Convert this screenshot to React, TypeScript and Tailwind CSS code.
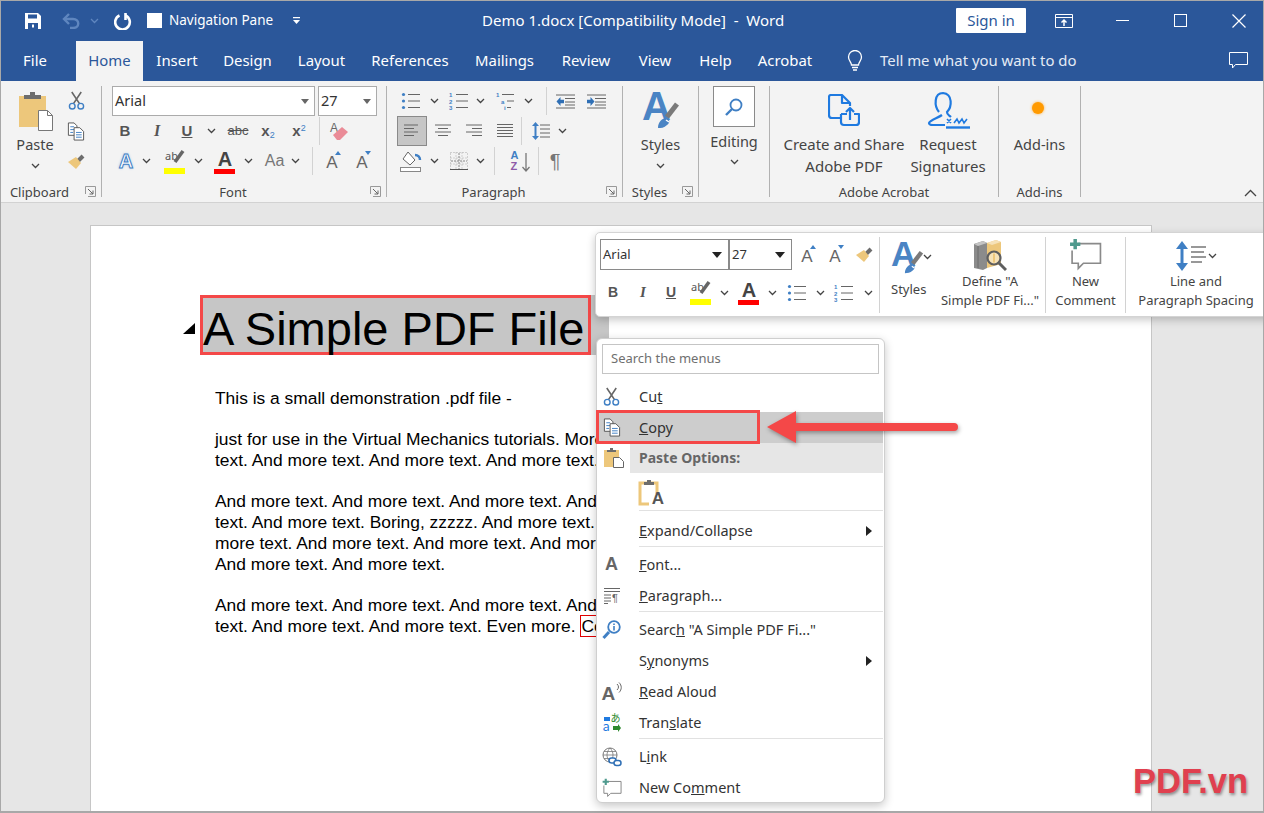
import React from 'react';

const Chev = ({ color = '#444' }: { color?: string }) => (
  <svg width="9" height="6" viewBox="0 0 9 6" fill="none" stroke={color} strokeWidth="1.3"><path d="M1 1l3.5 3.5L8 1" /></svg>
);

const Launcher = () => (
  <svg width="11" height="11" viewBox="0 0 11 11" fill="none" stroke="#666"><path d="M.5 8V.5H10.5V10.5H3" stroke="#999" /><path d="M3 3l5 5M8 4.5V8H4.5" /></svg>
);

const Sep = () => <div className="w-px h-[111px] bg-[#b1b1b1] shrink-0" />;
const VSep = ({ className = 'h-[28px]' }: { className?: string }) => <div className={`w-px bg-[#d2d2d2] shrink-0 ${className}`} />;

const Slot = ({ className, children }: { className: string; children?: React.ReactNode }) => (
  <div className={`flex items-center justify-center shrink-0 ${className}`}>{children}</div>
);

const Cut = ({ w = 17, h = 19 }: { w?: number; h?: number }) => (
  <svg width={w} height={h} viewBox="0 0 18 20" fill="none">
    <path d="M4 1l8 12M14 1L6 13" stroke="#666" strokeWidth="1.7" />
    <circle cx="4.5" cy="16" r="3" stroke="#3f7fc4" strokeWidth="1.5" />
    <circle cx="13.5" cy="16" r="3" stroke="#3f7fc4" strokeWidth="1.5" />
  </svg>
);

const CopyIcon = () => (
  <svg width="18" height="19" viewBox="0 0 18 20" fill="#fff" stroke="#555">
    <path d="M1 1h6l3 3v10H1z" />
    <path d="M3 5h4M3 8h4M3 11h3" stroke="#3f7fc4" />
    <path d="M7 6h6l4 4v9H7z" />
    <path d="M9 11h6M9 13.5h6M9 16h6" stroke="#3f7fc4" />
  </svg>
);

const Painter = () => (
  <svg width="18" height="16" viewBox="0 0 18 16">
    <path d="M11 7l5-5" stroke="#6d6d6d" strokeWidth="4" />
    <path d="M1 8l8-5 5 6-5 6z" fill="#edc77b" />
  </svg>
);

const PasteIcon = () => (
  <svg width="36" height="40" viewBox="0 0 36 40">
    <rect x="2" y="5" width="27" height="31" fill="#edc77b" />
    <path d="M7 8V4h6V1h5v3h6v4z" fill="#6d6d6d" />
    <path d="M21.5 19.5h9l5 5v15h-14z" fill="#fff" stroke="#777" />
    <path d="M30.5 19.5v5h5" fill="none" stroke="#777" />
  </svg>
);

const LinesIcon = ({ d, color = '#666' }: { d: string; color?: string }) => (
  <svg width="18" height="16" viewBox="0 0 18 16" fill="none" stroke={color}><path d={d} /></svg>
);

const Bullets = () => (
  <svg width="20" height="18" viewBox="0 0 20 18" fill="none">
    <path d="M7 2.5h12M7 9h12M7 15.5h12" stroke="#666" />
    <circle cx="2.5" cy="2.5" r="1.6" fill="#3f7fc4" /><circle cx="2.5" cy="9" r="1.6" fill="#3f7fc4" /><circle cx="2.5" cy="15.5" r="1.6" fill="#3f7fc4" />
  </svg>
);

const Numbers = () => (
  <svg className="overflow-visible" width="20" height="18" viewBox="0 0 20 18" fill="none">
    <path d="M7 2.5h12M7 9h12M7 15.5h12" stroke="#666" />
    <text x="0" y="5" fontSize="6" fontWeight="700" fill="#3f7fc4" stroke="none" fontFamily="Liberation Sans">1</text>
    <text x="0" y="11.5" fontSize="6" fontWeight="700" fill="#3f7fc4" stroke="none" fontFamily="Liberation Sans">2</text>
    <text x="0" y="18" fontSize="6" fontWeight="700" fill="#3f7fc4" stroke="none" fontFamily="Liberation Sans">3</text>
  </svg>
);

const Multilevel = () => (
  <svg className="overflow-visible" width="20" height="18" viewBox="0 0 20 18" fill="none">
    <path d="M6 2.5h12M11 9h7M11 15.5h4" stroke="#666" />
    <text x="0" y="5" fontSize="6" fontWeight="700" fill="#3f7fc4" stroke="none" fontFamily="Liberation Sans">1</text>
    <text x="5" y="11.5" fontSize="6" fontWeight="700" fill="#3f7fc4" stroke="none" fontFamily="Liberation Sans">a</text>
    <text x="8" y="17.5" fontSize="6" fontWeight="700" fill="#3f7fc4" stroke="none" fontFamily="Liberation Sans">i</text>
  </svg>
);

const Indent = ({ flip = false }: { flip?: boolean }) => (
  <svg width="19" height="15" viewBox="0 0 19 15" fill="none">
    {flip ? (
      <>
        <path d="M0 1h19M8 4.5h11M8 8h11M8 11h11M0 14h19" stroke="#666" />
        <path d="M0 5.8h3.5V3l4 4.5-4 4.5V9.2H0z" fill="#2f6fb5" />
      </>
    ) : (
      <>
        <path d="M0 1h19M9 4.5h10M9 8h10M9 11h10M0 14h19" stroke="#666" />
        <path d="M8 5.8H4.5V3l-4 4.5 4 4.5V9.2H8z" fill="#2f6fb5" />
      </>
    )}
  </svg>
);

const FontA = ({ className }: { className: string }) => (
  <span className={`font-['Liberation_Sans',sans-serif] font-bold leading-none ${className}`}>A</span>
);

const Highlight = () => (
  <div className="relative w-[22px] h-[25px]">
    <span className="absolute left-px top-0 text-[11px] leading-[13px] text-[#555]">ab</span>
    <svg className="absolute left-[9px] top-0" width="13" height="16" viewBox="0 0 13 16"><path d="M2 13l8-11" stroke="#666" strokeWidth="3.5" /></svg>
    <div className="absolute left-0 bottom-0 w-[21px] h-[6px] bg-[#ffff00]" />
  </div>
);

const FontColor = () => (
  <div className="relative w-[22px] h-[25px] flex justify-center">
    <FontA className="text-[20px] text-[#444]" />
    <div className="absolute left-0 bottom-0 w-[21px] h-[5px] bg-[#ff0000]" />
  </div>
);

const SizeA = ({ up }: { up: boolean }) => (
  <div className="relative w-[20px] h-[20px] flex items-end justify-center">
    <span className="font-['Liberation_Sans',sans-serif] text-[#666] leading-none text-[17px]">A</span>
    <svg className="absolute right-0 top-0" width="7" height="5" viewBox="0 0 7 5" fill="#3f7fc4"><path d={up ? 'M0 4h6L3 0z' : 'M0 0h6L3 4z'} /></svg>
  </div>
);

const StylesIcon = ({ w = 38, h = 38 }: { w?: number; h?: number }) => (
  <svg className="overflow-visible" width={w} height={h} viewBox="0 0 38 38">
    <text x="0" y="29" fontSize="40" fontWeight="700" fill="#4a84c4" fontFamily="Liberation Sans">A</text>
    <path d="M25 26l10-13" stroke="#7a7a7a" strokeWidth="5" />
    <path d="M16 37c0-6 4-10 9-10 3 1 3 5 0 7-3 3-6 3-9 3z" fill="#4a84c4" />
    <path d="M24 29l3 2" stroke="#fff" strokeWidth="1.5" />
  </svg>
);

const CommentPlus = ({ w = 22, h = 20 }: { w?: number; h?: number }) => (
  <svg width={w} height={h} viewBox="0 0 32 32" fill="none">
    <path d="M9 5.5h21.5v19H14l-5 5v-5H3V12" stroke="#8a8a8a" strokeWidth="1.6" fill="#fff" />
    <path d="M6 1v10M1 6h10" stroke="#4f9a8e" strokeWidth="3.4" />
  </svg>
);

const Group = ({ className, label, launcher, children }: { className: string; label: string; launcher?: boolean; children: React.ReactNode }) => (
  <div className={`relative flex flex-col h-[117px] shrink-0 ${className}`}>
    <div className="h-[96px]">{children}</div>
    <div className={`h-[21px] leading-[21px] text-center text-[13px] text-[#444] ${launcher ? 'pr-[22px]' : ''}`}>{label}</div>
    {launcher && <div className="absolute right-[5px] bottom-[6px]"><Launcher /></div>}
  </div>
);

const tabs = [
  { label: 'File', cls: 'w-[70px] mr-[6px] text-white' },
  { label: 'Home', cls: 'w-[67px] bg-[#f3f3f3] text-[#2b579a]' },
  { label: 'Insert', cls: 'w-[68px] text-white' },
  { label: 'Design', cls: 'w-[73px] text-white' },
  { label: 'Layout', cls: 'w-[75px] text-white' },
  { label: 'References', cls: 'w-[102px] text-white' },
  { label: 'Mailings', cls: 'w-[87px] text-white' },
  { label: 'Review', cls: 'w-[76px] text-white' },
  { label: 'View', cls: 'w-[62px] text-white' },
  { label: 'Help', cls: 'w-[59px] text-white' },
  { label: 'Acrobat', cls: 'w-[80px] text-white' },
];

function TitleBar() {
  return (
    <div className="h-[40px] pb-[1px] bg-[#2b579a] flex items-center text-white shrink-0">
      <div className="w-[482px] flex items-center shrink-0">
        <svg className="ml-[24px]" width="18" height="18" viewBox="0 0 18 18">
          <path d="M1 1h13l3 3v13H1z" fill="#fff" />
          <rect x="4" y="2.5" width="9" height="4" fill="#2b579a" />
          <rect x="4" y="11" width="10" height="6" fill="#2b579a" />
          <rect x="8" y="12.5" width="2" height="3" fill="#fff" />
        </svg>
        <svg className="ml-[20px]" width="18" height="16" viewBox="0 0 18 16" fill="none" stroke="#5f86bf" strokeWidth="2.4">
          <path d="M2 6h9c7 0 7 9 0 9H8" /><path d="M7 1L2 6l5 5" />
        </svg>
        <div className="ml-[10px]"><Chev color="#5f86bf" /></div>
        <svg className="ml-[15px]" width="18" height="18" viewBox="0 0 18 18" fill="none" stroke="#fff" strokeWidth="2.6">
          <path d="M5.5 3.5a7.3 7.3 0 1 0 6 0" /><path d="M11.5 1v7" />
        </svg>
        <div className="ml-[15px] w-[15px] h-[15px] bg-white" />
        <div className="ml-[7px] w-[100px] text-[13.5px] whitespace-nowrap">Navigation Pane</div>
        <svg className="ml-[24px]" width="7" height="8" viewBox="0 0 7 8" fill="#fff"><path d="M0 0h7v1.3H0zM0 3h7L3.5 7z" /></svg>
      </div>
      <div className="text-[15px] whitespace-pre">Demo 1.docx [Compatibility Mode]  -  Word</div>
      <div className="ml-auto flex items-center">
        <div className="w-[70px] h-[25px] bg-white text-[#2b579a] text-[15px] leading-[25px] text-center rounded-[1px]">Sign in</div>
        <svg className="ml-[29px]" width="18" height="14" viewBox="0 0 18 14" fill="none" stroke="#fff"><path d="M.5 3.5h17M.5.5h17v13H.5z" /><path d="M9 12V6M6.5 8.5L9 6l2.5 2.5" strokeWidth="1.5" /></svg>
        <div className="ml-[43px] w-[13px] h-px bg-white" />
        <div className="ml-[45px] w-[13px] h-[13px] border border-white" />
        <svg className="ml-[45px] mr-[18px]" width="14" height="14" viewBox="0 0 14 14" stroke="#fff" strokeWidth="1.2"><path d="M.5.5l13 13M13.5.5l-13 13" /></svg>
      </div>
    </div>
  );
}

function TabRow() {
  return (
    <div className="h-[40px] bg-[#2b579a] flex items-stretch text-[14.9px] shrink-0">
      {tabs.map((t) => (
        <div key={t.label} className={`leading-[38px] text-center whitespace-nowrap shrink-0 ${t.cls}`}>{t.label}</div>
      ))}
      <div className="ml-[21px] flex items-center text-[#e4ebf5]">
        <svg width="18" height="22" viewBox="0 0 18 22" fill="none" stroke="#fff" strokeWidth="1.3">
          <path d="M5.5 15c0-3-3-4-3-8a6.5 6.5 0 0 1 13 0c0 4-3 5-3 8z" /><path d="M6 17.5h6M7 20h4" />
        </svg>
        <span className="ml-[16px] -mt-[2px] whitespace-nowrap">Tell me what you want to do</span>
      </div>
      <div className="ml-auto mr-[16px] flex items-center">
        <svg width="19" height="18" viewBox="0 0 19 18" fill="none" stroke="#fff"><path d="M.5.5h18v12H6.5l-3 3.5v-3.5h-3z" /></svg>
      </div>
    </div>
  );
}

function Ribbon() {
  return (
    <div className="relative h-[122px] bg-[#f3f3f3] border-b border-[#d2d2d2] flex items-start pt-[5px] text-[#444] shrink-0">
      <Group className="w-[101px]" label="Clipboard" launcher>
        <div className="flex">
          <div className="w-[70px] flex flex-col items-center">
            <div className="mt-[5px] h-[40px]"><PasteIcon /></div>
            <div className="mt-[2px] text-[14.5px] leading-[22px]">Paste</div>
            <div className="mt-[8px] flex"><Chev /></div>
          </div>
          <div className="-ml-[3px] w-[18px] flex flex-col items-center">
            <div className="mt-[5px]"><Cut /></div>
            <div className="mt-[12px]"><CopyIcon /></div>
            <div className="mt-[13px]"><Painter /></div>
          </div>
        </div>
      </Group>
      <Sep />
      <Group className="w-[284px]" label="Font" launcher>
        <div className="pl-[10px]">
          <div className="flex h-[30px]">
            <div className="w-[203px] border border-[#ababab] bg-white flex items-center pl-[2px] text-[14.5px] text-[#333]">
              Arial
              <svg className="ml-auto mr-[5px]" width="8" height="5" fill="#666"><path d="M0 0h8L4 5z" /></svg>
            </div>
            <div className="ml-[3px] w-[59px] border border-[#ababab] bg-white flex items-center pl-[2px] text-[14.5px] text-[#333]">
              27
              <svg className="ml-auto mr-[5px]" width="8" height="5" fill="#666"><path d="M0 0h8L4 5z" /></svg>
            </div>
          </div>
          <div className="flex h-[30px] items-center">
            <Slot className="w-[26px]"><span className="font-['Liberation_Sans',sans-serif] font-bold text-[15px] text-[#555]">B</span></Slot>
            <Slot className="w-[38px]"><span className="font-['Liberation_Serif',serif] italic font-bold text-[16px] text-[#555]">I</span></Slot>
            <Slot className="w-[22px]"><span className="font-['Liberation_Sans',sans-serif] font-bold text-[15px] text-[#555] underline">U</span></Slot>
            <Slot className="w-[26px]"><Chev /></Slot>
            <Slot className="w-[28px]"><span className="font-['Liberation_Sans',sans-serif] text-[13px] text-[#555] line-through">abc</span></Slot>
            <Slot className="w-[32px]"><span className="font-['Liberation_Sans',sans-serif] font-bold text-[15px] text-[#555]">x<sub className="text-[#3f7fc4] text-[9px] font-normal">2</sub></span></Slot>
            <Slot className="w-[30px]"><span className="font-['Liberation_Sans',sans-serif] font-bold text-[15px] text-[#555]">x<sup className="text-[#3f7fc4] text-[9px] font-normal">2</sup></span></Slot>
            <Slot className="w-[10px]"><VSep /></Slot>
            <Slot className="w-[30px]">
              <div className="relative w-[20px] h-[20px]">
                <span className="absolute left-[1px] -top-[2px] font-['Liberation_Sans',sans-serif] text-[12px] text-[#666]">A</span>
                <svg className="absolute left-[3px] top-[5px]" width="17" height="15" viewBox="0 0 17 15"><path d="M1 9l9-8 6 5-8 8H5z" fill="#ea8b97" /></svg>
              </div>
            </Slot>
          </div>
          <div className="flex h-[30px] items-center">
            <Slot className="w-[28px]"><span className="font-['Liberation_Sans',sans-serif] font-bold text-[20px] text-white [-webkit-text-stroke:1px_#3f7fc4] [text-shadow:0_0_3px_#8ab6e6]">A</span></Slot>
            <Slot className="w-[12px]"><Chev /></Slot>
            <Slot className="ml-[8px] w-[30px]"><Highlight /></Slot>
            <Slot className="ml-[2px] w-[12px]"><Chev /></Slot>
            <Slot className="ml-[6px] w-[30px]"><FontColor /></Slot>
            <Slot className="ml-[2px] w-[12px]"><Chev /></Slot>
            <Slot className="ml-[6px] w-[29px]"><span className="font-['Liberation_Sans',sans-serif] text-[16px] text-[#777]">Aa</span></Slot>
            <Slot className="w-[12px]"><Chev /></Slot>
            <div className="ml-[11px]"><VSep /></div>
            <Slot className="ml-[4px] w-[30px]"><SizeA up /></Slot>
            <Slot className="w-[30px]"><SizeA up={false} /></Slot>
          </div>
        </div>
      </Group>
      <Sep />
      <Group className="w-[235px]" label="Paragraph" launcher>
        <div className="pl-[10px]">
          <div className="flex h-[30px] items-center">
            <Slot className="w-[28px]"><Bullets /></Slot>
            <Slot className="ml-[3px] w-[12px]"><Chev /></Slot>
            <Slot className="ml-[6px] w-[26px]"><Numbers /></Slot>
            <Slot className="ml-[2px] w-[12px]"><Chev /></Slot>
            <Slot className="ml-[7px] w-[26px]"><Multilevel /></Slot>
            <Slot className="ml-[4px] w-[10px]"><Chev /></Slot>
            <div className="ml-[13px]"><VSep /></div>
            <Slot className="ml-[3px] w-[30px]"><Indent /></Slot>
            <Slot className="ml-[1px] w-[30px]"><Indent flip /></Slot>
          </div>
          <div className="flex h-[30px] items-center">
            <Slot className="w-[30px] h-[30px] bg-[#c6c6c6] border border-[#8a8a8a]"><LinesIcon d="M1 2h14M1 5.5h10M1 9h14M1 12.5h10" /></Slot>
            <Slot className="w-[31px]"><LinesIcon d="M1 2h16M4 5.5h10M1 9h16M4 12.5h10" /></Slot>
            <Slot className="w-[31px]"><LinesIcon d="M1 2h16M7 5.5h10M1 9h16M7 12.5h10" /></Slot>
            <Slot className="w-[31px]"><LinesIcon d="M1 1.5h16M1 4.5h16M1 7.5h16M1 10.5h16M1 13.5h16" /></Slot>
            <div className="ml-[1px]"><VSep /></div>
            <Slot className="ml-[7px] w-[24px]">
              <svg width="18" height="20" viewBox="0 0 18 20" fill="none">
                <path d="M8 4h10M8 8h10M8 12h10M8 16h10" stroke="#666" />
                <path d="M3.5 3v14" stroke="#3f7fc4" strokeWidth="2" /><path d="M0 5l3.5-4L7 5zM0 15l3.5 4L7 15z" fill="#3f7fc4" />
              </svg>
            </Slot>
            <Slot className="ml-[3px] w-[12px]"><Chev /></Slot>
          </div>
          <div className="flex h-[30px] items-center">
            <Slot className="w-[28px]">
              <svg width="22" height="21" viewBox="0 0 22 21" fill="none">
                <path d="M8 1l7 8-5 5-7-6z" stroke="#666" fill="#fff" /><path d="M15 4c3 0 5 2 5 5" stroke="#3f7fc4" strokeWidth="2.5" />
                <rect x=".5" y="16.5" width="20" height="4" stroke="#888" fill="#fff" />
              </svg>
            </Slot>
            <Slot className="ml-[3px] w-[12px]"><Chev /></Slot>
            <Slot className="ml-[6px] w-[26px]">
              <svg width="18" height="18" viewBox="0 0 18 18" fill="none">
                <path d="M.5.5h17v17H.5zM6 .5v17M12 .5v17M.5 6h17M.5 12h17" stroke="#aaa" strokeDasharray="1 2" />
                <path d="M9 1v16M1 9h16" stroke="#888" strokeDasharray="2 1" />
                <path d="M0 17.5h18" stroke="#555" />
              </svg>
            </Slot>
            <Slot className="ml-[2px] w-[12px]"><Chev /></Slot>
            <div className="ml-[8px]"><VSep /></div>
            <Slot className="ml-[13px] w-[24px]">
              <div className="relative w-[19px] h-[22px] font-['Liberation_Sans',sans-serif] font-bold text-[11px] leading-[11px]">
                <div className="text-[#3f7fc4]">A</div>
                <div className="text-[#8e5aa8]">Z</div>
                <svg className="absolute right-0 top-[3px]" width="8" height="19" viewBox="0 0 8 19" fill="none" stroke="#777" strokeWidth="1.3"><path d="M4 0v18M.5 14L4 18l3.5-4" /></svg>
              </div>
            </Slot>
            <div className="ml-[6px]"><VSep /></div>
            <Slot className="ml-[5px] w-[22px]"><span className="text-[20px] text-[#777] font-['Liberation_Sans',sans-serif]">¶</span></Slot>
          </div>
        </div>
      </Group>
      <Sep />
      <Group className="w-[75px]" label="Styles" launcher>
        <div className="flex flex-col items-center">
          <div className="mt-[5px] h-[40px]"><StylesIcon /></div>
          <div className="mt-[2px] text-[14.5px] leading-[22px]">Styles</div>
          <div className="mt-[8px] flex"><Chev /></div>
        </div>
      </Group>
      <Sep />
      <Group className="w-[70px]" label="">
        <div className="flex flex-col items-center">
          <Slot className="w-[42px] h-[41px] bg-white border border-[#8a8a8a]">
            <svg width="18" height="18" viewBox="0 0 18 18" fill="none" stroke="#3f7fc4" strokeWidth="1.8"><circle cx="11" cy="7" r="5.5" /><path d="M7 11l-6 6" strokeWidth="2.4" /></svg>
          </Slot>
          <div className="mt-[3px] text-[14.5px] leading-[22px]">Editing</div>
          <div className="mt-[7px] flex"><Chev /></div>
        </div>
      </Group>
      <Sep />
      <Group className="w-[228px]" label="Adobe Acrobat">
        <div className="flex pl-[9px]">
          <div className="w-[130px] flex flex-col items-center text-[15px] leading-[22px] text-center">
            <div className="mt-[8px] h-[37px]">
              <svg width="32" height="33" viewBox="0 0 32 33" fill="none" stroke="#1f7ae0" strokeWidth="2.2" strokeLinejoin="round">
                <path d="M13 24H4c-2 0-3-1-3-3V3c0-1 1-2 2-2h11l8 8v3" /><path d="M14 1v8h8" />
                <path d="M13 20v8c0 2 1 3 3 3h12c2 0 3-1 3-3v-8h-5M19 20h-6" /><path d="M22 26V14M18 18l4-4 4 4" />
              </svg>
            </div>
            <div className="mt-[2px] whitespace-nowrap">Create and Share</div>
            <div className="whitespace-nowrap">Adobe PDF</div>
          </div>
          <div className="w-[78px] flex flex-col items-center text-[15px] leading-[22px] text-center">
            <div className="mt-[5px] h-[40px]">
              <svg width="43" height="38" viewBox="0 0 43 38" fill="none" stroke="#1f7ae0" strokeWidth="2.2">
                <path d="M15 24c-4 3-12 5-13 8 0 2 2 2 4 2h12M24 26c-2-2-4-2-4-5 5-5 6-18-4-19-9 0-9 13-4 19" />
                <path d="M19 36.500h24" strokeWidth="2.4" />
                <path d="M20 28l4 4M24 28l-4 4M27 32l3-4 2 4 3-4 2 4 3-4" strokeWidth="1.6" />
              </svg>
            </div>
            <div className="mt-[2px]">Request</div>
            <div>Signatures</div>
          </div>
        </div>
      </Group>
      <Sep />
      <Group className="w-[81px]" label="Add-ins">
        <div className="flex flex-col items-center">
          <div className="mt-[16px] mb-[15px] -ml-[3px] w-[12px] h-[12px] rounded-full bg-[#ff9a00] shadow-[0_0_3px_#ffb040]" />
          <div className="mt-[4px] text-[14.5px] leading-[22px]">Add-ins</div>
        </div>
      </Group>
      <Sep />
      <div className="ml-auto mr-[7px] mt-[103px]">
        <svg width="13" height="8" viewBox="0 0 13 8" fill="none" stroke="#444" strokeWidth="1.3"><path d="M1 7l5.500-5.500L12 7" /></svg>
      </div>
    </div>
  );
}

function Page() {
  return (
    <div className="flex-1 bg-[#e6e6e6] pt-[22px] pl-[89px] overflow-hidden">
      <div className="w-[1062px] h-[600px] bg-white border border-[#c6c6c6] pt-[69px] font-['Liberation_Sans',sans-serif] text-black overflow-hidden">
        <div className="relative ml-[109px] w-[409px] h-[60px] bg-[#c6c6c6]">
          <div className="absolute -left-[17px] top-[28px] w-0 h-0 border-l-[12px] border-l-transparent border-b-[11px] border-b-black" />
          <div className="w-[391px] h-[60px] border-[3px] border-[#f44848] text-[47px] leading-[62px] whitespace-nowrap">A Simple PDF File</div>
        </div>
        <div className="ml-[124px] mt-[33px] text-[17.4px] leading-[20.7px] whitespace-nowrap">
          <p className="mb-[20.7px]">This is a small demonstration .pdf file -</p>
          <p className="mb-[20.7px]">just for use in the Virtual Mechanics tutorials. More text. And more<br />text. And more text. And more text. And more text. And more text.</p>
          <p className="mb-[20.7px]">And more text. And more text. And more text. And more text. And more<br />text. And more text. Boring, zzzzz. And more text. And more text. And<br />more text. And more text. And more text. And more text. And more text.<br />And more text. And more text.</p>
          <p>And more text. And more text. And more text. And more text. And more<br />text. And more text. And more text. Even more. <span className="border border-[#e00000] py-[0px]">Continued on page 2 ...</span></p>
        </div>
      </div>
    </div>
  );
}

function MiniToolbar() {
  return (
    <div className="absolute left-[594px] top-[231px] w-[680px] h-[85px] bg-white border border-[#d4d4d4] rounded-[5px] shadow-[0_3px_8px_rgba(0,0,0,0.22)] flex text-[13px] text-[#444]">
      <div className="w-[283px] pl-[4px] pt-[6px]">
        <div className="flex h-[31px]">
          <div className="w-[129px] border border-[#8a8a8a] flex items-center pl-[2px] text-[13px] text-[#333]">
            Arial<svg className="ml-auto mr-[6px]" width="10" height="6" fill="#222"><path d="M0 0h10L5 6z" /></svg>
          </div>
          <div className="w-[63px] border border-[#8a8a8a] flex items-center pl-[2px] text-[13px] text-[#333]">
            27<svg className="ml-auto mr-[6px]" width="10" height="6" fill="#222"><path d="M0 0h10L5 6z" /></svg>
          </div>
          <Slot className="ml-px w-[28px]"><SizeA up /></Slot>
          <Slot className="w-[28px]"><SizeA up={false} /></Slot>
          <Slot className="w-[30px]"><Painter /></Slot>
        </div>
        <div className="flex h-[31px] mt-[7px] items-center">
          <Slot className="w-[26px]"><span className="font-['Liberation_Sans',sans-serif] font-bold text-[14px] text-[#555]">B</span></Slot>
          <Slot className="w-[34px]"><span className="font-['Liberation_Serif',serif] italic font-bold text-[15px] text-[#555]">I</span></Slot>
          <Slot className="w-[22px]"><span className="font-['Liberation_Sans',sans-serif] font-bold text-[14px] text-[#555] underline">U</span></Slot>
          <Slot className="ml-[2px] w-[34px]"><Highlight /></Slot>
          <Slot className="w-[12px]"><Chev /></Slot>
          <Slot className="ml-[4px] w-[30px]"><FontColor /></Slot>
          <Slot className="ml-[2px] w-[12px]"><Chev /></Slot>
          <Slot className="ml-[4px] w-[30px]"><Bullets /></Slot>
          <Slot className="ml-[2px] w-[12px]"><Chev /></Slot>
          <Slot className="ml-[3px] w-[30px]"><Numbers /></Slot>
          <Slot className="ml-[3px] w-[12px]"><Chev /></Slot>
        </div>
      </div>
      <VSep className="mt-[4px] h-[76px]" />
      <div className="w-[55px] pl-[11px] pt-[7px]">
        <div className="flex items-center h-[34px]"><StylesIcon w={33} h={33} /><div className="-ml-px"><Chev /></div></div>
        <div className="mt-[6px] w-[32px] text-center leading-[19px]">Styles</div>
      </div>
      <div className="w-[110px] flex flex-col items-center pt-[6px]">
        <svg width="34" height="33" viewBox="0 0 34 33">
          <path d="M1 5l9-3 4 2v25l-4 2-9-2z" fill="#8b8b8b" />
          <path d="M1 5l9-3 4 2-9 3z" fill="#c4c4c4" />
          <path d="M5 7v22" stroke="#6a6a6a" strokeWidth="1" />
          <path d="M14 4l9-3 5 2v22l-14 4z" fill="#edc77b" />
          <path d="M14 4l9-3 5 2-9 3z" fill="#f6e2b8" />
          <circle cx="21" cy="19" r="6.500" fill="#f6e2b8" stroke="#5e5e5e" strokeWidth="2.200" />
          <path d="M21 14.500v9" stroke="#edc77b" strokeWidth="2" />
          <path d="M26 24l7 7" stroke="#5e5e5e" strokeWidth="3" />
        </svg>
        <div className="mt-[0px] leading-[19px] text-center whitespace-nowrap">Define "A<br />Simple PDF Fi..."</div>
      </div>
      <VSep className="mt-[4px] h-[76px]" />
      <div className="w-[79px] flex flex-col items-center pt-[5px]">
        <div className="h-[34px]"><CommentPlus w={33} h={33} /></div>
        <div className="leading-[19px] text-center">New<br />Comment</div>
      </div>
      <VSep className="mt-[4px] h-[76px]" />
      <div className="w-[139px] pl-[1px] flex flex-col items-center pt-[6px]">
        <div className="h-[33px] flex items-center">
          <svg width="32" height="32" viewBox="0 0 32 32" fill="none">
            <path d="M6 6v20" stroke="#3f7fc4" strokeWidth="3" /><path d="M0 9l6-8 6 8zM0 23l6 8 6-8z" fill="#3f7fc4" />
            <path d="M15 7h15M15 12h13M15 17h15M15 22h11" stroke="#777" strokeWidth="1.3" />
          </svg>
          <Chev />
        </div>
        <div className="leading-[19px] text-center whitespace-nowrap">Line and<br />Paragraph Spacing</div>
      </div>
    </div>
  );
}

const MenuRow = ({ icon, arrow, children }: { icon?: React.ReactNode; arrow?: boolean; children: React.ReactNode }) => (
  <div className="flex items-center h-[31px]">
    <Slot className="w-[29px]">{icon}</Slot>
    <div className="ml-[13px] whitespace-nowrap">{children}</div>
    {arrow && <svg className="ml-auto mr-[12px]" width="6" height="10" fill="#222"><path d="M0 0l6 5-6 5z" /></svg>}
  </div>
);

const MenuSep = () => <div className="ml-[42px] mr-px h-px bg-[#e1e1e1]" />;

function ContextMenu() {
  return (
    <div className="absolute left-[595px] top-[337px] w-[289px] h-[465px] bg-white border border-[#cfcfcf] rounded-[6px] shadow-[0_3px_10px_rgba(0,0,0,0.22)] text-[14.5px] text-[#333]">
      <div className="mx-[5px] mt-[5px] h-[30px] border border-[#c5c5c5] pl-[8px] text-[13px] leading-[27px] text-[#6f6f6f]">Search the menus</div>
      <div className="h-[7px]" />
      <MenuRow icon={<Cut />}>Cu<u>t</u></MenuRow>
      <div className="bg-[#cdcdcd] mr-px"><MenuRow icon={<CopyIcon />}><u>C</u>opy</MenuRow></div>
      <div className="flex h-[30px]">
        <Slot className="w-[32px] pl-[2px]">
          <svg width="20" height="20" viewBox="0 0 20 20">
            <rect x="0" y="2" width="15" height="17" fill="#edc77b" /><path d="M3 4V2h3V0h3v2h3v2z" fill="#6d6d6d" />
            <path d="M9.500 9.500h6l4 4v6h-10z" fill="#fff" stroke="#666" />
          </svg>
        </Slot>
        <div className="flex-1 ml-px mr-px bg-[#e6e6e6] pl-[9px] font-bold text-[14px] text-[#666] leading-[30px]">Paste Options:</div>
      </div>
      <div className="h-[37px] pl-[41px] pt-[6px]">
        <div className="relative w-[26px] h-[28px]">
          <svg width="26" height="28" viewBox="0 0 26 28" fill="none">
            <path d="M11 25H2V4h17v11" stroke="#edc77b" strokeWidth="3" /><path d="M6 6V3h3V1h4v2h3v3z" fill="#6d6d6d" />
          </svg>
          <span className="absolute right-0 bottom-0 font-['Liberation_Sans',sans-serif] font-bold text-[17px] leading-[17px] text-[#555]">A</span>
        </div>
      </div>
      <MenuSep />
      <div className="h-[4px]" />
      <MenuRow arrow><u>E</u>xpand/Collapse</MenuRow>
      <MenuSep />
      <div className="h-[2px]" />
      <MenuRow icon={<span className="font-['Liberation_Sans',sans-serif] font-bold text-[18px] text-[#666]">A</span>}><u>F</u>ont...</MenuRow>
      <MenuRow icon={
        <svg width="18" height="16" viewBox="0 0 18 16" fill="none" stroke="#666"><path d="M1 .5h16M1 3.500h16M1 7h7M1 10h7M1 13h7M1 15.500h4" /><text x="9" y="14" fontSize="11" fill="#666" stroke="none" fontFamily="Liberation Sans">¶</text></svg>
      }><u>P</u>aragraph...</MenuRow>
      <MenuSep />
      <div className="h-[2px]" />
      <MenuRow icon={
        <svg width="19" height="20" viewBox="0 0 19 20" fill="none"><circle cx="12" cy="7" r="5.800" stroke="#3f7fc4" strokeWidth="1.8" /><path d="M7 12l-5.500 6" stroke="#3f7fc4" strokeWidth="3" /><path d="M12 3.500v1.500M12 6v4.500" stroke="#3f7fc4" strokeWidth="1.6" /></svg>
      }>Searc<u>h</u> "A Simple PDF Fi..."</MenuRow>
      <MenuRow arrow>S<u>y</u>nonyms</MenuRow>
      <MenuRow icon={
        <div className="relative w-[20px] h-[20px]"><span className="absolute left-0 bottom-0 font-['Liberation_Sans',sans-serif] font-bold text-[19px] leading-[17px] text-[#666]">A</span>
          <svg className="absolute right-0 top-0" width="6" height="11" viewBox="0 0 6 11" fill="none" stroke="#666"><path d="M1 2c2 2 2 4 0 6M3 .5c3 3 3 7 0 10" /></svg></div>
      }><u>R</u>ead Aloud</MenuRow>
      <MenuRow icon={
        <div className="relative w-[18px] h-[19px] leading-none font-['Noto_Sans_CJK_JP',sans-serif]">
          <span className="absolute right-0 top-0 text-[10px] text-[#2d8a2d]">あ</span>
          <span className="absolute left-0 bottom-0 text-[13px] text-[#1f7ae0]">a</span>
          <svg className="absolute left-0 top-px" width="8" height="8" fill="#1f7ae0"><path d="M1 3h6v4H1z" /></svg>
          <svg className="absolute right-0 bottom-0" width="9" height="8" fill="#2d8a2d"><path d="M1 2h5V0l3 4-3 4V6H1z" /></svg>
        </div>
      }>Tran<u>s</u>late</MenuRow>
      <MenuSep />
      <div className="h-[2px]" />
      <MenuRow icon={
        <svg width="20" height="20" viewBox="0 0 20 20" fill="none"><circle cx="8" cy="8" r="7" stroke="#777" /><path d="M1 8h14M8 1c-4 4-4 10 0 14M8 1c4 4 4 10 0 14M2 4.500h12M2 11.500h12" stroke="#777" strokeWidth=".8" /><rect x="7" y="11" width="7" height="5" rx="2.500" fill="#fff" stroke="#2f6fb5" strokeWidth="1.500" /><rect x="12" y="13.500" width="7" height="5" rx="2.500" fill="#fff" stroke="#2f6fb5" strokeWidth="1.500" /></svg>
      }>L<u>i</u>nk</MenuRow>
      <MenuRow icon={<CommentPlus />}>New Co<u>m</u>ment</MenuRow>
      <div className="absolute left-[-1px] top-[71px] w-[164px] h-[34px] border-[3px] border-[#f44848]" />
    </div>
  );
}

const Arrow = () => (
  <svg className="absolute left-[764px] top-[406px] drop-shadow-[1px_2px_2px_rgba(0,0,0,0.35)]" width="197" height="38" viewBox="0 0 197 38">
    <path d="M2 20L31 4v12h158a4 4 0 0 1 0 8H31v12z" fill="#f44848" />
  </svg>
);

export default function App() {
  return (
    <div className="relative w-[1264px] h-[813px] overflow-hidden flex flex-col bg-[#e6e6e6] border-t border-x border-[#a8a8a8] font-['Noto_Sans','Open_Sans',sans-serif]">
      <div className="flex flex-col -mx-px shrink-0">
        <TitleBar />
        <TabRow />
        <Ribbon />
      </div>
      <Page />
      <div className="h-[2px] bg-[#a8a8a8] shrink-0" />
      <MiniToolbar />
      <ContextMenu />
      <Arrow />
      <div className="absolute left-[1132px] top-[760px] font-['Liberation_Sans',sans-serif] font-bold text-[34.5px] leading-[40px] text-[#e0404f] [text-shadow:1px_2px_3px_rgba(0,0,0,0.4)]">PDF.vn</div>
    </div>
  );
}
